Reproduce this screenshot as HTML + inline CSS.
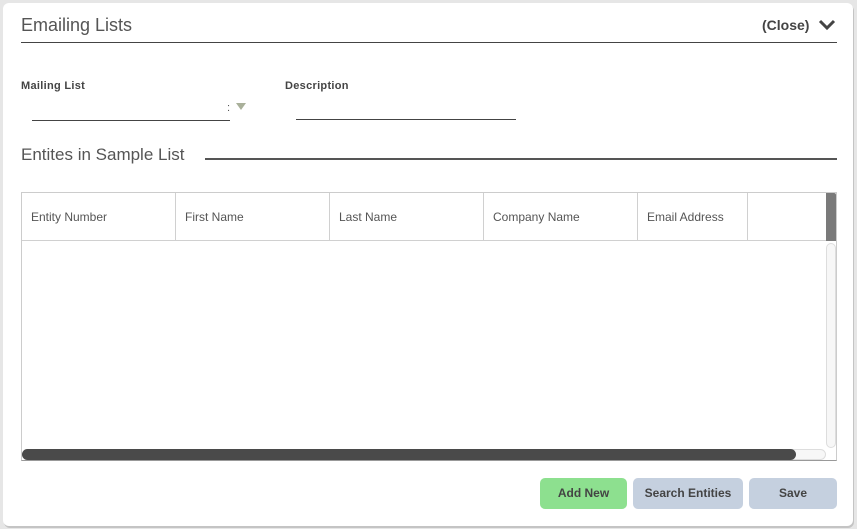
<!DOCTYPE html>
<html><head><meta charset="utf-8"><style>
*{box-sizing:border-box;margin:0;padding:0}
body{width:857px;height:529px;background:#e6e6e6;font-family:"Liberation Sans",sans-serif;position:relative;overflow:hidden;color:#555}
.card{position:absolute;left:3px;top:3px;width:850px;height:523px;background:#fff;border-radius:6px;box-shadow:1px 2px 0 #c4c4c4}
.a{position:absolute;white-space:nowrap}
.lbl{font-size:11px;font-weight:bold;color:#444;letter-spacing:.3px}
.th{position:absolute;top:0;height:48px;border-right:1px solid #d0d0d0;font-size:12px;color:#555;padding:17px 0 0 9px}
.btn{position:absolute;top:478px;height:31px;border-radius:5px;font-size:12px;font-weight:bold;color:#444;text-align:center;line-height:31px}
</style></head><body>
<div class="card"></div>
<div class="a" style="left:21px;top:15px;font-size:18px;color:#555">Emailing Lists</div>
<div class="a" style="left:21px;top:42px;width:816px;height:1px;background:#444"></div>
<div class="a" style="left:762px;top:17px;font-size:14px;font-weight:bold;color:#444">(Close)</div>
<svg class="a" style="left:818px;top:19px" width="18" height="12" viewBox="0 0 18 12"><path d="M2 2 L9 9 L16 2" fill="none" stroke="#444" stroke-width="3"/></svg>
<div class="a lbl" style="left:21px;top:80px">Mailing List</div>
<div class="a" style="left:32px;top:120px;width:198px;height:1px;background:#444"></div>
<div class="a" style="left:227px;top:102px;font-size:11px;color:#555">:</div>
<svg class="a" style="left:236px;top:103px" width="11" height="8"><path d="M0 0H10L5 7Z" fill="#a9b09a"/></svg>
<div class="a lbl" style="left:285px;top:80px">Description</div>
<div class="a" style="left:296px;top:119px;width:220px;height:1px;background:#444"></div>
<div class="a" style="left:21px;top:145px;font-size:17px;color:#555">Entites in Sample List</div>
<div class="a" style="left:205px;top:158px;width:632px;height:2px;background:#555"></div>
<div class="a" style="left:21px;top:192px;width:816px;height:269px;border:1px solid #ccc;border-bottom:1px solid #999;border-top-color:#ccc">
  <div style="position:absolute;left:0;top:0;width:804px;height:48px;border-bottom:1px solid #d0d0d0"></div>
  <div class="th" style="left:0;width:154px">Entity Number</div>
  <div class="th" style="left:154px;width:154px">First Name</div>
  <div class="th" style="left:308px;width:154px">Last Name</div>
  <div class="th" style="left:462px;width:154px">Company Name</div>
  <div class="th" style="left:616px;width:110px">Email Address</div>
  <div style="position:absolute;left:804px;top:0;width:10px;height:48px;background:#7a7a7a;border-radius:0 2px 0 0"></div>
  <div style="position:absolute;left:804px;top:50px;width:10px;height:205px;border:1px solid #ddd;border-radius:5px;background:#f7f7f7"></div>
  <div style="position:absolute;left:0;top:256px;width:804px;height:11px;border:1px solid #ddd;border-radius:6px;background:#f7f7f7"></div>
  <div style="position:absolute;left:0;top:256px;width:774px;height:11px;background:#4a4a4a;border-radius:6px"></div>
</div>
<div class="btn" style="left:540px;width:87px;background:#8de08f">Add New</div>
<div class="btn" style="left:633px;width:110px;background:#c5d0df">Search Entities</div>
<div class="btn" style="left:749px;width:88px;background:#c5d0df">Save</div>
</body></html>
